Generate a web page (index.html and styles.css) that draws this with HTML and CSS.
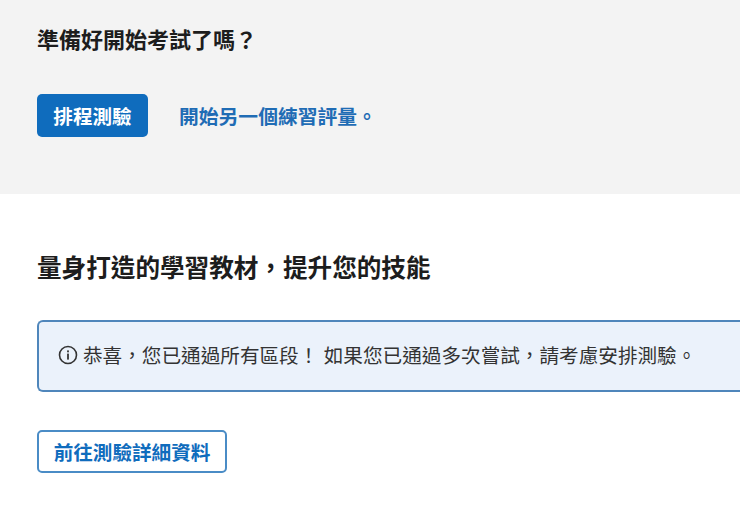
FILE: index.html
```html
<!DOCTYPE html>
<html lang="zh-Hant">

<head>
    <meta charset="UTF-8">
    <title>考試</title>
    <link rel="stylesheet" href="styles.css">
</head>

<body>
    <section class="ready-section">
        <h2 class="ready-title">準備好開始考試了嗎？</h2>
        <div class="ready-actions">
            <a class="btn btn-primary" href="#">排程測驗</a>
            <a class="practice-link" href="#">開始另一個練習評量。</a>
        </div>
    </section>

    <section class="study-section">
        <h2 class="study-title">量身打造的學習教材，提升您的技能</h2>
        <div class="alert">
            <svg class="alert-icon" viewBox="0 0 20 20" width="20" height="20" aria-hidden="true">
                <circle cx="10" cy="10" r="8.5" fill="none" stroke="#333" stroke-width="1.6" />
                <rect x="9.1" y="8.6" width="1.8" height="6" fill="#333" />
                <rect x="9.1" y="5.4" width="1.8" height="1.9" fill="#333" />
            </svg>
            <span>恭喜，您已通過所有區段！ 如果您已通過多次嘗試，請考慮安排測驗。</span>
        </div>
        <a class="btn btn-outline" href="#">前往測驗詳細資料</a>
    </section>
</body>

</html>
```

FILE: styles.css
```css
* {
    margin: 0;
    padding: 0;
    box-sizing: border-box;
}

body {
    font-family: "Liberation Sans", "Noto Sans CJK TC", sans-serif;
    background-color: #fff;
    color: #222;
}

a {
    text-decoration: none;
}

.ready-section {
    background-color: #f3f3f3;
    height: 194px;
    padding: 26px 37px 0;
}

.ready-title {
    font-size: 22px;
    line-height: 30px;
    font-weight: 700;
    color: #1d1d1d;
}

.ready-actions {
    display: flex;
    align-items: center;
    gap: 31px;
    margin-top: 38px;
}

.btn {
    display: inline-flex;
    align-items: center;
    justify-content: center;
    height: 43px;
    border-radius: 5px;
    font-size: 19.6px;
    font-weight: 700;
}

.btn-primary {
    width: 111px;
    background-color: #0f6cbd;
    color: #fff;
}

.btn-outline {
    width: 190px;
    background-color: #fff;
    color: #0f6cbd;
    border: 2px solid #4a8cc6;
}

.practice-link {
    font-size: 19.8px;
    font-weight: 700;
    color: #1f6cb5;
}

.study-section {
    padding-top: 58px;
    padding-left: 37px;
}

.study-title {
    font-size: 24.6px;
    line-height: 34px;
    font-weight: 700;
    color: #1d1d1d;
}

/* runs off the right edge of the window, so no right border */
.alert {
    display: flex;
    align-items: center;
    gap: 5px;
    height: 72px;
    margin-top: 34px;
    margin-bottom: 38px;
    padding-left: 19px;
    padding-bottom: 3px;
    background-color: #ebf2fb;
    border: 2px solid #4f86bb;
    border-right: none;
    border-radius: 6px 0 0 6px;
    font-size: 19.63px;
    color: #333;
}

.alert-icon {
    flex-shrink: 0;
}
```
